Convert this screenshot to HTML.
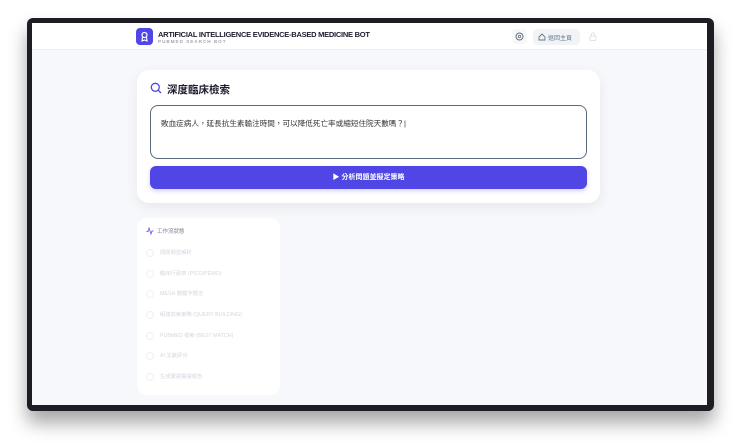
<!DOCTYPE html>
<html><head><meta charset="utf-8"><style>
*{margin:0;padding:0;box-sizing:border-box}
body{width:740px;height:447px;background:#fff;position:relative;overflow:hidden;font-family:"Liberation Sans","Noto Sans CJK TC",sans-serif}
.frame{position:absolute;left:27px;top:18px;width:687px;height:393px;background:#1f1d24;border-radius:6px;box-shadow:0 12px 18px rgba(0,0,0,.35)}
.screen{position:absolute;left:32px;top:23px;width:675px;height:382px;background:#f7f8fb;overflow:hidden}
.hdr{position:absolute;left:0;top:0;width:675px;height:27px;background:#fff;border-bottom:1px solid #eceef2}
.logo{position:absolute;left:104px;top:5px;width:17px;height:17px;background:#4f46e5;border-radius:4px}
.t1{position:absolute;left:126px;top:7px;font-size:7.5px;font-weight:bold;color:#1e1b2e;letter-spacing:-.25px;white-space:nowrap}
.t2{position:absolute;left:126px;top:16px;font-size:4.6px;font-weight:bold;color:#a0a6b2;letter-spacing:1px}
.gear{position:absolute;left:480px;top:6px;width:15px;height:15px;background:#f6f7f9;border-radius:4px}
.home{position:absolute;left:501px;top:6px;width:47px;height:16px;background:#f1f3f6;border-radius:5px;font-size:6px;color:#64748b;padding:4px 0 0 15px}
.card{position:absolute;left:105px;top:47px;width:463px;height:133px;background:#fff;border-radius:12px;box-shadow:0 4px 12px rgba(0,0,0,.07)}
.ttl{position:absolute;left:30px;top:12px;font-size:10.5px;font-weight:bold;color:#1e1b2e}
.ta{position:absolute;left:13px;top:35px;width:437px;height:54px;border:1.5px solid #5a6b80;border-radius:8px;font-size:7.6px;color:#333;padding:12px 0 0 10px}
.btn{position:absolute;left:13px;top:96px;width:437px;height:23px;background:#4f46e5;border-radius:6px;color:#fff;font-size:7px;font-weight:bold;text-align:center;line-height:23px;box-shadow:0 2px 4px rgba(79,70,229,.25)}
.side{position:absolute;left:105px;top:195px;width:143px;height:177px;background:#fff;border-radius:10px}
.sh{position:absolute;left:20px;top:9px;font-size:5.5px;color:#7c8290}
.it{position:absolute;left:9px;font-size:5.3px;color:#d3d7de;white-space:nowrap}
.it i{display:inline-block;width:8px;height:8px;border:1px solid #eef0f3;border-radius:50%;vertical-align:middle;margin-right:6px}
</style></head><body>
<div class="frame"></div>
<div class="screen">
<div class="hdr">
<div class="logo"><svg width="17" height="17" viewBox="0 0 17 17"><circle cx="8.5" cy="7" r="2.5" fill="none" stroke="#fff" stroke-width="1.2"/><path d="M6.5 9 L6 13 L8.5 12 L11 13 L10.5 9" fill="none" stroke="#fff" stroke-width="1.1"/></svg></div>
<div class="t1">ARTIFICIAL INTELLIGENCE EVIDENCE-BASED MEDICINE BOT</div>
<div class="t2">PUBMED SEARCH BOT</div>
<div class="gear"><svg width="15" height="15" viewBox="0 0 15 15"><circle cx="7.5" cy="7.5" r="3.5" fill="none" stroke="#6b7280" stroke-width="1"/><circle cx="7.5" cy="7.5" r="1.2" fill="none" stroke="#6b7280" stroke-width=".8"/></svg></div>
<div class="home"><svg style="position:absolute;left:5px;top:4px" width="8" height="8" viewBox="0 0 8 8"><path d="M1 4 L4 1 L7 4 V7 H1Z" fill="none" stroke="#64748b" stroke-width=".9"/></svg>返回主頁</div>
<svg style="position:absolute;left:557px;top:9px" width="8" height="9" viewBox="0 0 8 9"><rect x="1" y="4" width="6" height="4.5" rx="1" fill="none" stroke="#d8dbe0" stroke-width=".8"/><path d="M2.5 4 V2.5 a1.5 1.5 0 0 1 3 0 V4" fill="none" stroke="#d8dbe0" stroke-width=".8"/></svg>
</div>
<div class="card">
<svg style="position:absolute;left:13px;top:12px" width="12" height="12" viewBox="0 0 12 12"><circle cx="5.3" cy="5.3" r="4" fill="none" stroke="#4f46e5" stroke-width="1.3"/><path d="M8.3 8.3 L11 11" stroke="#4f46e5" stroke-width="1.3"/></svg>
<div class="ttl">深度臨床檢索</div>
<div class="ta">敗血症病人，延長抗生素輸注時間，可以降低死亡率或縮短住院天數嗎？|</div>
<div class="btn">▶ 分析問題並擬定策略</div>
</div>
<div class="side">
<svg style="position:absolute;left:9px;top:9px" width="8" height="8" viewBox="0 0 8 8"><path d="M0.5 4.5 H2 L3 1 L5 7 L6 4 H7.5" fill="none" stroke="#6d63f0" stroke-width=".9"/></svg>
<div class="sh">工作流狀態</div>
<div class="it" style="top:30px"><i></i>問題類型解析</div>
<div class="it" style="top:51px"><i></i>臨床行政架 (PICO/PEMO)</div>
<div class="it" style="top:71px"><i></i>MESH 關鍵字選定</div>
<div class="it" style="top:92px"><i></i>組建檢索策略 (QUERY BUILDING)</div>
<div class="it" style="top:113px"><i></i>PUBMED 檢索 (BEST MATCH)</div>
<div class="it" style="top:133px"><i></i>AI 文獻評分</div>
<div class="it" style="top:154px"><i></i>生成實證醫證報告</div>
</div>
</div>
</body></html>
